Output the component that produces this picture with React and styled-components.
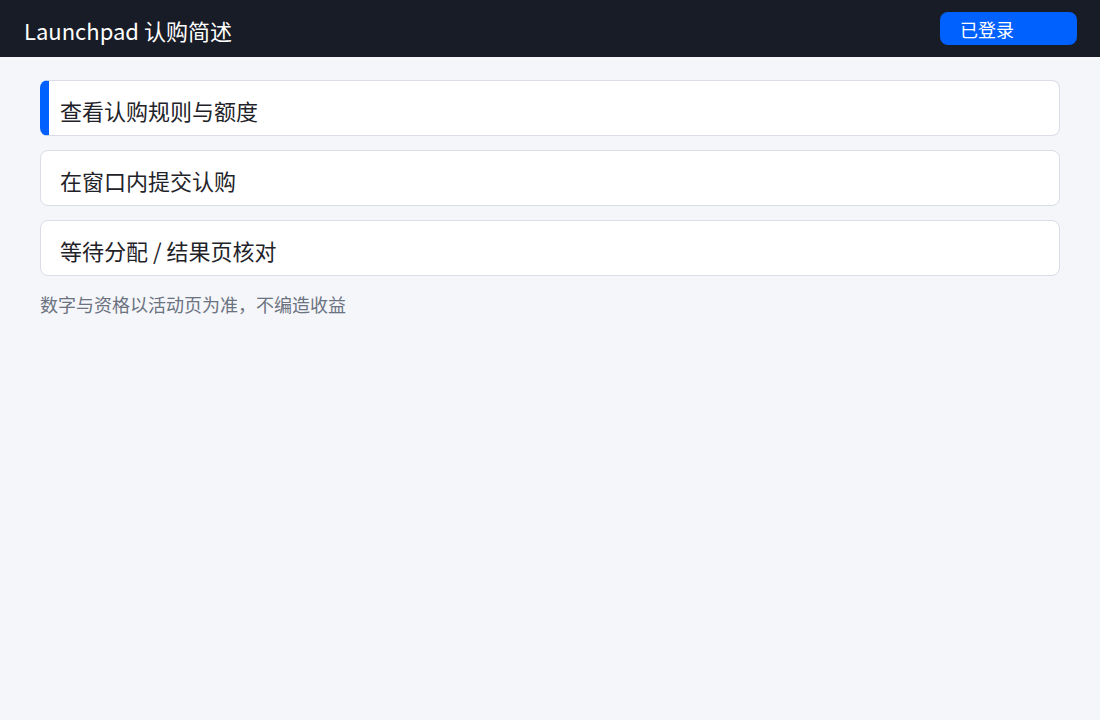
import styled, { createGlobalStyle } from "styled-components";

const GlobalStyle = createGlobalStyle`
    html, body {
        margin: 0;
        padding: 0;
        background: #f5f6fa;
        font-family: "Noto Sans CJK SC", "Noto Sans", sans-serif;
    }
`;

const Page = styled.div`
    min-height: 720px;
    background: #f5f6fa;
`;

const Header = styled.header`
    height: 57px;
    background: #181c26;
    display: flex;
    align-items: center;
    justify-content: space-between;
    padding: 0 23px 0 24px;
    box-sizing: border-box;
`;

const Title = styled.h1`
    margin: 0;
    font-size: 22px;
    font-weight: 400;
    color: #ffffff;
    line-height: 1;
    padding-top: 2px;
`;

const LoginButton = styled.button`
    width: 137px;
    height: 33px;
    margin-top: 0;
    border: 0;
    border-radius: 8px;
    background: #0061ff;
    color: #ffffff;
    font-family: inherit;
    font-size: 18px;
    text-align: left;
    padding: 0 0 0 20px;
    cursor: pointer;
`;

const Main = styled.main`
    padding: 23px 40px 0;
    display: flex;
    flex-direction: column;
    gap: 14px;
`;

const StepCard = styled.div`
    height: 56px;
    box-sizing: border-box;
    background: #ffffff;
    border: 1px solid #dadde6;
    border-radius: 8px;
    display: flex;
    align-items: center;
    padding-left: 19px;
    padding-top: 3px;
    font-size: 22px;
    color: #1f2329;
    ${(props) =>
        props.active &&
        `
    border-left: 9px solid #0061ff;
    padding-left: 11px;
  `}
`;

const Note = styled.p`
    margin: 1px 0 0;
    font-size: 18px;
    color: #6b7280;
`;

const steps = ["查看认购规则与额度", "在窗口内提交认购", "等待分配 / 结果页核对"];

export default function App() {
    return (
        <Page>
            <GlobalStyle />
            <Header>
                <Title>Launchpad 认购简述</Title>
                <LoginButton>已登录</LoginButton>
            </Header>
            <Main>
                {steps.map((s, i) => (
                    <StepCard key={s} active={i === 0}>
                        {s}
                    </StepCard>
                ))}
                <Note>数字与资格以活动页为准，不编造收益</Note>
            </Main>
        </Page>
    );
}
